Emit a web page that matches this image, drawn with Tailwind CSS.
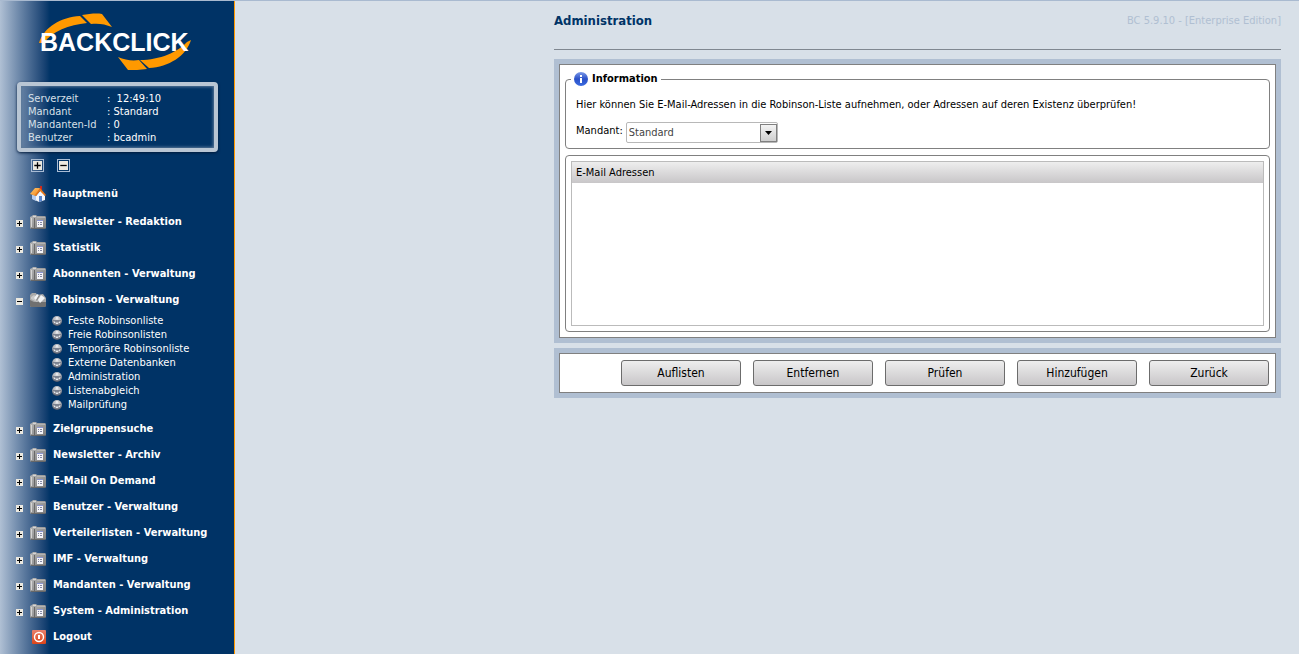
<!DOCTYPE html>
<html lang="de">
<head>
    <title>BACKCLICK - Administration</title>
    <meta charset="UTF-8">
    <meta name="viewport" content="width=device-width, initial-scale=1">
    <script src="https://cdn.jsdelivr.net/npm/@tailwindcss/browser@4"></script>
</head>
<body class="min-h-screen bg-[#d8e0e8] font-['DejaVu_Sans_Condensed','DejaVu_Sans',sans-serif] text-[11px] text-black">

<!-- icons -->
<svg class="absolute size-0" aria-hidden="true">
    <defs>
        <linearGradient id="folderFill" x1="0" y1="0" x2="1" y2="1">
            <stop offset="0" stop-color="#b8b8b8"/>
            <stop offset="1" stop-color="#7a7a7a"/>
        </linearGradient>
        <radialGradient id="ballFill" cx="0.5" cy="0.3" r="0.7">
            <stop offset="0" stop-color="#e4e4e4"/>
            <stop offset="0.6" stop-color="#a5a8b0"/>
            <stop offset="1" stop-color="#4a5060"/>
        </radialGradient>
        <linearGradient id="roofFill" x1="0" y1="0" x2="1" y2="1">
            <stop offset="0" stop-color="#ffc870"/>
            <stop offset="1" stop-color="#f08418"/>
        </linearGradient>
        <linearGradient id="logoutFill" x1="0" y1="0" x2="0" y2="1">
            <stop offset="0" stop-color="#e8806c"/>
            <stop offset="1" stop-color="#dc4418"/>
        </linearGradient>
        <linearGradient id="infoFill" x1="0" y1="0" x2="0" y2="1">
            <stop offset="0" stop-color="#7c9ae8"/>
            <stop offset="0.5" stop-color="#2a50c8"/>
            <stop offset="1" stop-color="#3c6ce0"/>
        </linearGradient>
    </defs>
    <symbol id="plus" viewBox="0 0 7 7">
        <path fill="#ece9e0" d="M0 0h7v7H0z"/>
        <path fill="#000" d="M3 1h1v2h2v1H4v2H3V4H1V3h2z"/>
    </symbol>
    <symbol id="minus" viewBox="0 0 7 7">
        <path fill="#ece9e0" d="M0 0h7v7H0z"/>
        <path fill="#000" d="M1 3h5v1H1z"/>
    </symbol>
    <symbol id="folder" viewBox="0 0 16 14">
        <path fill="url(#folderFill)" d="M0 2l2-1 1-1h3l1 1h8l1 1v11l-1 1H1l-1-1z"/>
        <path fill="#686868" d="M4 3h1v10H4zM1 13h14v1H1z"/>
        <path fill="#d6d6d6" d="M1 3h1v9H1zM3 1h3v1H3z"/>
        <path fill="#b4b4b4" d="M7 2h8v1H7z"/>
        <path fill="#f4f4f8" d="M7 5h6v7H7z"/>
        <path fill="#8c96d0" d="M7 5h6v1H7z"/>
        <path fill="#8488a4" d="M8 7h1v1H8zM10 7h2v1h-2zM8 9h1v1H8zM10 9h2v1h-2z"/>
    </symbol>
    <symbol id="folderOpen" viewBox="0 0 16 14">
        <path fill="#a8a8a8" d="M0 2l2-2h4l1 2 6-1 3 4v7l-1 2H1l-1-1z"/>
        <path fill="#707070" d="M0 7l4 2h12v4l-1 1H1l-1-1z"/>
        <path fill="#c9c9c9" d="M1 4l3-2 6 4-3 3-6-3z"/>
        <path fill="#f2f4f6" d="M4 5l3-4 2 1-3 5zM11 2l4 3-5 5-2-3z"/>
        <path fill="#8a8a8a" d="M6 7l3-5h1L7 8z"/>
    </symbol>
    <symbol id="ball" viewBox="0 0 10 10">
        <circle cx="5" cy="5" r="5" fill="url(#ballFill)"/>
        <path fill="#7c8290" d="M1 4h8v1H7v1H3V5H1z"/>
        <path fill="#e4e6ec" d="M4 1h2v2H4zM2 6h1v1H2zM7 6h1v1H7zM4 7h2v1H4z"/>
    </symbol>
    <symbol id="home" viewBox="0 0 16 16">
        <path fill="#f4f7fc" d="M2 9l4 1 5-6 4 6v4l-6 2-6-3z"/>
        <path fill="#b4ccf0" d="M2 9l4 1v5l-4-2z"/>
        <path fill="#5a86cc" d="M9 10h3v5l-3 1z"/>
        <path fill="#d0281c" d="M10 0h2v4h-2z"/>
        <path fill="url(#roofFill)" d="M5 2h5L6 10 0 8z"/>
        <path fill="#e87818" d="M10 2l6 7-1 1-5-5-4 5-1-1z"/>
    </symbol>
    <symbol id="logout" viewBox="0 0 14 14">
        <rect width="14" height="14" rx="1" fill="url(#logoutFill)"/>
        <circle cx="7" cy="7" r="4.5" fill="none" stroke="#fff" stroke-width="1.4"/>
        <path fill="#fff" d="M6 5h2v4H6z"/>
    </symbol>
    <symbol id="info" viewBox="0 0 14 14">
        <circle cx="7" cy="7" r="7" fill="url(#infoFill)"/>
        <path fill="#fff" d="M6 3h2v2H6zM6 6h2v5H6z"/>
    </symbol>
</svg>

<div class="flex min-h-screen border-t border-[#a9bad0]">
    <aside class="w-[235px] shrink-0 border-r border-[#ff9900] bg-[#003366] bg-linear-to-r from-[#b0c0d4] from-0% to-[#003366] to-[50px] text-white">
        <a href="#" class="block pt-3 pl-[39px]">
            <svg class="h-[60px] w-[153px]" viewBox="0 0 153 60" role="img" aria-label="BACKCLICK">
                <path fill="#ff9900" d="M0 30C5 14 22 4 41 3l7 7C30 12 13 18 5 30z"/>
                <path fill="#ff9900" d="M43 2C50 1 57 0 63 1l10 13c-7-3-14-4-21-3z"/>
                <path fill="#ff9900" d="M152 27c-5 16-22 27-42 28l-9-8c20 0 38-8 47-18z"/>
                <path fill="#ff9900" d="M108 56c-7 1-13 1-19 1L79 44c7 3 14 4 21 3z"/>
                <text x="1" y="38" font-family="Liberation Sans, Arial, sans-serif" font-weight="bold" font-size="25" fill="#fff">BACKCLICK</text>
            </svg>
        </a>

        <dl class="mt-[9px] ml-[17px] grid w-[201px] grid-cols-[79px_1fr] rounded border-4 border-[#b9c6d4] px-[7px] pt-1.5 pb-1 leading-[13px] shadow-[inset_0_0_3px_1px_#5a7898,0_1px_3px_#001a3a]">
            <dt class="text-[#d8e0e8]">Serverzeit</dt><dd>:&nbsp; 12:49:10</dd>
            <dt class="text-[#d8e0e8]">Mandant</dt><dd>: Standard</dd>
            <dt class="text-[#d8e0e8]">Mandanten-Id</dt><dd>: 0</dd>
            <dt class="text-[#d8e0e8]">Benutzer</dt><dd>: bcadmin</dd>
        </dl>

        <div class="mt-[7px] ml-[31px] flex gap-[13px]">
            <button type="button" aria-label="Alle öffnen" class="size-[13px] border border-[#a9bcd4] p-px"><svg class="size-[9px]"><use href="#plus"/></svg></button>
            <button type="button" aria-label="Alle schließen" class="size-[13px] border border-[#a9bcd4] p-px"><svg class="size-[9px]"><use href="#minus"/></svg></button>
        </div>

        <nav class="mt-[9px] pl-4 font-bold">
            <a href="#" class="mb-0.5 flex h-[26px] items-center pl-3.5"><svg class="mr-[7px] size-4"><use href="#home"/></svg>Hauptmenü</a>
            <a href="#" class="flex h-[26px] items-center"><svg class="mt-0.5 mr-[7px] size-[7px]"><use href="#plus"/></svg><svg class="mr-[7px] h-3.5 w-4"><use href="#folder"/></svg>Newsletter - Redaktion</a>
            <a href="#" class="flex h-[26px] items-center"><svg class="mt-0.5 mr-[7px] size-[7px]"><use href="#plus"/></svg><svg class="mr-[7px] h-3.5 w-4"><use href="#folder"/></svg>Statistik</a>
            <a href="#" class="flex h-[26px] items-center"><svg class="mt-0.5 mr-[7px] size-[7px]"><use href="#plus"/></svg><svg class="mr-[7px] h-3.5 w-4"><use href="#folder"/></svg>Abonnenten - Verwaltung</a>
            <a href="#" class="flex h-[26px] items-center"><svg class="mt-0.5 mr-[7px] size-[7px]"><use href="#minus"/></svg><svg class="mr-[7px] h-3.5 w-4"><use href="#folderOpen"/></svg>Robinson - Verwaltung</a>
            <ul class="mt-px mb-1 pl-9 font-normal leading-[14px]">
                <li><a href="#" class="flex items-center gap-1.5"><svg class="size-2.5"><use href="#ball"/></svg>Feste Robinsonliste</a></li>
                <li><a href="#" class="flex items-center gap-1.5"><svg class="size-2.5"><use href="#ball"/></svg>Freie Robinsonlisten</a></li>
                <li><a href="#" class="flex items-center gap-1.5"><svg class="size-2.5"><use href="#ball"/></svg>Temporäre Robinsonliste</a></li>
                <li><a href="#" class="flex items-center gap-1.5"><svg class="size-2.5"><use href="#ball"/></svg>Externe Datenbanken</a></li>
                <li><a href="#" class="flex items-center gap-1.5"><svg class="size-2.5"><use href="#ball"/></svg>Administration</a></li>
                <li><a href="#" class="flex items-center gap-1.5"><svg class="size-2.5"><use href="#ball"/></svg>Listenabgleich</a></li>
                <li><a href="#" class="flex items-center gap-1.5"><svg class="size-2.5"><use href="#ball"/></svg>Mailprüfung</a></li>
            </ul>
            <a href="#" class="flex h-[26px] items-center"><svg class="mt-0.5 mr-[7px] size-[7px]"><use href="#plus"/></svg><svg class="mr-[7px] h-3.5 w-4"><use href="#folder"/></svg>Zielgruppensuche</a>
            <a href="#" class="flex h-[26px] items-center"><svg class="mt-0.5 mr-[7px] size-[7px]"><use href="#plus"/></svg><svg class="mr-[7px] h-3.5 w-4"><use href="#folder"/></svg>Newsletter - Archiv</a>
            <a href="#" class="flex h-[26px] items-center"><svg class="mt-0.5 mr-[7px] size-[7px]"><use href="#plus"/></svg><svg class="mr-[7px] h-3.5 w-4"><use href="#folder"/></svg>E-Mail On Demand</a>
            <a href="#" class="flex h-[26px] items-center"><svg class="mt-0.5 mr-[7px] size-[7px]"><use href="#plus"/></svg><svg class="mr-[7px] h-3.5 w-4"><use href="#folder"/></svg>Benutzer - Verwaltung</a>
            <a href="#" class="flex h-[26px] items-center"><svg class="mt-0.5 mr-[7px] size-[7px]"><use href="#plus"/></svg><svg class="mr-[7px] h-3.5 w-4"><use href="#folder"/></svg>Verteilerlisten - Verwaltung</a>
            <a href="#" class="flex h-[26px] items-center"><svg class="mt-0.5 mr-[7px] size-[7px]"><use href="#plus"/></svg><svg class="mr-[7px] h-3.5 w-4"><use href="#folder"/></svg>IMF - Verwaltung</a>
            <a href="#" class="flex h-[26px] items-center"><svg class="mt-0.5 mr-[7px] size-[7px]"><use href="#plus"/></svg><svg class="mr-[7px] h-3.5 w-4"><use href="#folder"/></svg>Mandanten - Verwaltung</a>
            <a href="#" class="flex h-[26px] items-center"><svg class="mt-0.5 mr-[7px] size-[7px]"><use href="#plus"/></svg><svg class="mr-[7px] h-3.5 w-4"><use href="#folder"/></svg>System - Administration</a>
            <a href="#" class="flex h-[26px] items-center pl-4"><svg class="mr-[7px] size-3.5"><use href="#logout"/></svg>Logout</a>
        </nav>
    </aside>

    <main class="min-w-0 flex-1 pr-[18px]">
        <div class="ml-auto max-w-[727px]">
            <header class="flex h-[49px] items-start justify-between border-b border-[#7f8790] pt-3 leading-4">
                <h1 class="text-[13px] font-bold text-[#003366]">Administration</h1>
                <span class="text-[#b0bfd2]">BC 5.9.10 - [Enterprise Edition]</span>
            </header>

            <form action="#">
                <div class="mt-[9px] border-[5px] border-[#b0bfd2]">
                    <div class="border border-[#808080] bg-white px-[5px] pt-1.5 pb-[5px]">
                        <fieldset class="rounded border border-[#808080] px-[5px] pb-[5px]">
                            <legend class="flex h-4 items-center gap-1 px-[3px] font-bold"><svg class="size-3.5"><use href="#info"/></svg>Information</legend>
                            <p class="mt-2.5 px-[5px] leading-4">Hier können Sie E-Mail-Adressen in die Robinson-Liste aufnehmen, oder Adressen auf deren Existenz überprüfen!</p>
                            <div class="mt-[9px] flex items-start gap-[3px] px-[5px]">
                                <label for="mandant" class="leading-[18px]">Mandant:</label>
                                <div class="relative">
                                    <select id="mandant" class="block h-[21px] w-[152px] appearance-none rounded-xs border border-[#b8b8b8] bg-white px-0.5 pt-px text-[#444]">
                                        <option>Standard</option>
                                    </select>
                                    <span class="pointer-events-none absolute top-0.5 right-px flex h-[18px] w-[17px] items-center justify-center border border-[#808080] bg-linear-to-b from-[#f4f4f4] to-[#cfcfcf]">
                                        <svg class="h-1 w-[7px]" viewBox="0 0 7 4"><path d="M0 0h7L3.5 4z"/></svg>
                                    </span>
                                </div>
                            </div>
                        </fieldset>

                        <div class="mt-1.5 rounded border border-[#808080] p-[5px]">
                            <div class="min-h-[165px] border border-[#bbbbbb]">
                                <table class="w-full">
                                    <thead>
                                        <tr>
                                            <th class="h-[21px] bg-linear-to-b from-[#eeeeee] to-[#c8c6c8] px-1 pt-0.5 text-left font-normal">E-Mail Adressen</th>
                                        </tr>
                                    </thead>
                                    <tbody></tbody>
                                </table>
                            </div>
                        </div>
                    </div>
                </div>

                <div class="mt-[5px] border-[5px] border-[#b0bfd2]">
                    <div class="flex justify-end gap-3 border border-[#808080] bg-white p-1.5 text-[12px]">
                        <button type="button" class="h-[26px] w-[120px] rounded-[3px] border border-[#6c6c6c] bg-linear-to-b from-[#eeeeee] to-[#c8c6c8]">Auflisten</button>
                        <button type="button" class="h-[26px] w-[120px] rounded-[3px] border border-[#6c6c6c] bg-linear-to-b from-[#eeeeee] to-[#c8c6c8]">Entfernen</button>
                        <button type="button" class="h-[26px] w-[120px] rounded-[3px] border border-[#6c6c6c] bg-linear-to-b from-[#eeeeee] to-[#c8c6c8]">Prüfen</button>
                        <button type="button" class="h-[26px] w-[120px] rounded-[3px] border border-[#6c6c6c] bg-linear-to-b from-[#eeeeee] to-[#c8c6c8]">Hinzufügen</button>
                        <button type="button" class="h-[26px] w-[120px] rounded-[3px] border border-[#6c6c6c] bg-linear-to-b from-[#eeeeee] to-[#c8c6c8]">Zurück</button>
                    </div>
                </div>
            </form>
        </div>
    </main>
</div>
</body>
</html>
